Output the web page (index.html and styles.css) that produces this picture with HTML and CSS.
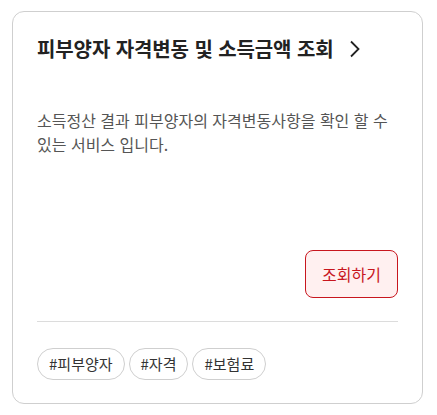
FILE: index.html
```html
<!DOCTYPE html>
<html lang="ko">
<head>
  <meta charset="UTF-8" />
  <meta name="viewport" content="width=device-width, initial-scale=1.0" />
  <title>피부양자 자격변동 및 소득금액 조회</title>
  <link rel="stylesheet" href="styles.css">
</head>
<body>
  <!-- 서비스 카드 -->
  <section class="service-card">
    <h2 class="card-title">
      <a href="#">피부양자 자격변동 및 소득금액 조회
        <svg class="chevron" width="12" height="18" viewBox="0 0 12 18">
          <path d="M2 1.5 L9.5 9 L2 16.5" fill="none" stroke="#222" stroke-width="1.8" />
        </svg>
      </a>
    </h2>
    <p class="card-desc">소득정산 결과 피부양자의 자격변동사항을 확인 할 수 있는 서비스 입니다.</p>
    <div class="card-action">
      <button type="button">조회하기</button>
    </div>
    <div class="card-tags">
      <a href="#" class="tag">#피부양자</a>
      <a href="#" class="tag">#자격</a>
      <a href="#" class="tag">#보험료</a>
    </div>
  </section>
</body>
</html>
```

FILE: styles.css
```css
body {
  margin: 0;
  padding: 11px 14px 11px 12px;
  background: #fff;
  font-family: "Noto Sans CJK KR", "Noto Sans", sans-serif;
  color: #222;
}
.service-card {
  border: 1px solid #cfcfcf;
  border-radius: 12px;
  padding: 23px 24px 23px;
  height: 393px;
  box-sizing: border-box;
  display: flex;
  flex-direction: column;
}
.card-title {
  margin: 0;
  font-size: 20px;
  font-weight: 700;
  line-height: 28px;
  letter-spacing: -0.1px;
}
.card-title a {
  color: #222;
  text-decoration: none;
  display: inline-flex;
  align-items: center;
  gap: 15px;
}
.card-desc {
  margin: 45px 0 0;
  font-size: 16px;
  line-height: 24px;
  color: #555;
}
.card-action {
  margin-top: auto;
  display: flex;
  justify-content: flex-end;
  padding-bottom: 23px;
  border-bottom: 1px solid #dcdcdc;
}
.card-action button {
  width: 93px;
  height: 48px;
  border: 1px solid #c8161e;
  border-radius: 8px;
  background: #fff0f0;
  color: #c8161e;
  font-family: inherit;
  font-size: 16px;
  cursor: pointer;
}
.card-tags {
  display: flex;
  gap: 4px;
  margin-top: 26px;
}
.tag {
  display: inline-block;
  padding: 0 11px;
  height: 32px;
  line-height: 30px;
  box-sizing: border-box;
  border: 1px solid #cfcfcf;
  border-radius: 16px;
  font-size: 15px;
  color: #333;
  text-decoration: none;
}
```
